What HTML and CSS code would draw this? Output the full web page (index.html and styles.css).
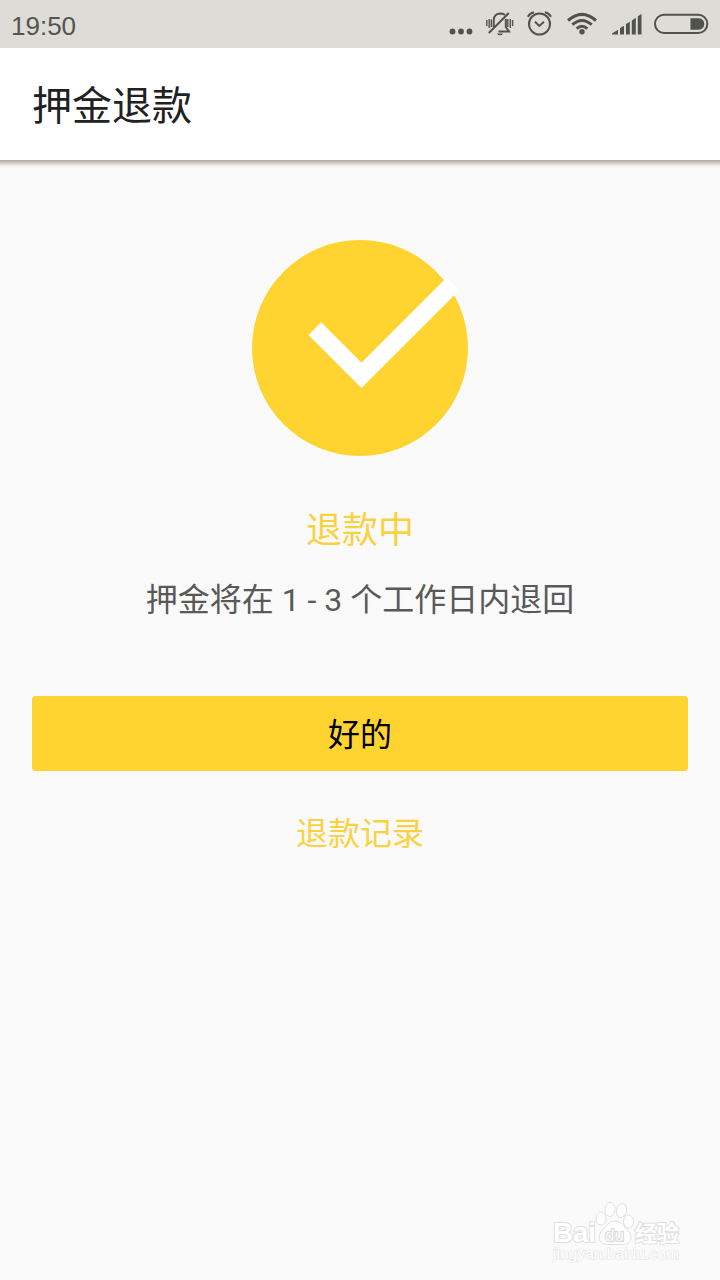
FILE: index.html
```html
<!DOCTYPE html>
<html lang="zh-CN">
<head>
<meta charset="utf-8">
<meta name="viewport" content="width=device-width, initial-scale=1">
<title>押金退款</title>
<link rel="stylesheet" href="styles.css">
</head>
<body>

<!-- 状态栏 -->
<div class="status">
	<span class="time">19:50</span>
	<div class="icons">
		<svg class="dots" width="24" height="48" viewBox="0 0 24 48">
			<circle cx="3.5" cy="31.5" r="2.9"/>
			<circle cx="12" cy="31.5" r="2.9"/>
			<circle cx="20.5" cy="31.5" r="2.9"/>
		</svg>
		<svg class="bell" width="30" height="48" viewBox="0 0 30 48">
			<path class="stroke" d="M20 14.8Q17.8 13.6 15 13.6Q9 14.2 8.7 20V27M20.8 19V27L24 31.5H13.5"/>
			<path class="stroke" d="M3.8 33L23.8 13"/>
			<path class="thin" d="M1.8 20V26M4.2 19V28M6.3 19.5V27M22.8 19V27M25.3 19V28M27.6 20V26"/>
			<path d="M12 33.4H18Q17 35.3 15 35.3Q13 35.3 12 33.4Z"/>
		</svg>
		<svg class="alarm" width="26" height="48" viewBox="0 0 26 48">
			<circle class="stroke" cx="13.5" cy="24" r="10.5"/>
			<path class="stroke" d="M9 21.8L13.3 26L18 21.8M1.8 16.8Q3.7 13.2 8 12.2M18.9 12.2Q23.2 13.2 25 16.8"/>
		</svg>
		<svg class="wifi" width="32" height="48" viewBox="0 0 32 48">
			<path class="thick" d="M2 20.5Q16 8.2 30 20.5M6.3 24.7Q16 16.2 25.7 24.7M10.7 28.7Q16 23.8 21.3 28.7"/>
			<circle cx="16" cy="31.7" r="2.7"/>
		</svg>
		<svg class="signal" width="30" height="48" viewBox="0 0 30 48">
			<path d="M0 34.5V33.5L6 29.8V34.5ZM8 34.5V28L12 25.7V34.5ZM14 34.5V24L17.8 21.7V34.5ZM19.8 34.5V20.5L23.8 17.7V34.5ZM25.8 34.5V16.3L29.5 14V34.5Z"/>
		</svg>
		<svg class="battery" width="55" height="48" viewBox="0 0 55 48">
			<rect class="outline" x="1" y="14.7" width="52.3" height="18.3" rx="9.1"/>
			<path d="M36.5 18.3H44.5Q50.3 18.8 50.3 24Q50.3 29.2 44.5 29.7H36.5Z"/>
		</svg>
	</div>
</div>

<div class="header">押金退款</div>

<!-- 退款结果 -->
<div class="content">
	<svg class="check" width="216" height="216" viewBox="0 0 216 216">
		<circle cx="108" cy="108" r="108"/>
		<path d="M62.8 88.6L109.5 135.3L201 43.8"/>
	</svg>
	<div class="state">退款中</div>
	<div class="tips">押金将在 1 - 3 个工作日内退回</div>
	<a class="btn">好的</a>
	<a class="record">退款记录</a>
</div>

<!-- 右下角水印 -->
<svg class="watermark" width="140" height="76" viewBox="0 0 140 76">
	<text class="logo" x="2" y="50" textLength="43" lengthAdjust="spacingAndGlyphs">Bai</text>
	<ellipse cx="50" cy="26.5" rx="5" ry="6.5"/>
	<ellipse cx="59" cy="17.5" rx="5" ry="7"/>
	<ellipse cx="70.5" cy="18.5" rx="5" ry="7" transform="rotate(12 70.5 18.5)"/>
	<ellipse cx="77.5" cy="29.5" rx="5" ry="6.5"/>
	<path d="M64 29C57 29 55 35 50 40C46 46 49 52.5 56 52.5H72C80 52.5 82 45 78 40C73 35 71 29 64 29Z"/>
	<text class="du" x="54" y="48.5" textLength="19" lengthAdjust="spacingAndGlyphs">du</text>
	<text class="cn" x="84" y="48.5">经验</text>
	<text class="url" x="2" y="67" textLength="126" lengthAdjust="spacingAndGlyphs">jingyan.baidu.com</text>
</svg>

</body>
</html>
```

FILE: styles.css
```css
html,body{margin:0;padding:0;}
body{
	position: relative;
	height: 1280px;
	overflow: hidden;
	font-family: Roboto,"Noto Sans CJK SC",sans-serif;
	background: #fafafa;
}

.status {
	display: flex;
	justify-content: space-between;
	height: 48px;
	line-height: 52px;
	background-color: #dddcd7;
	color: #545450;
}
.time {
	margin-left: 11px;
	font-family: "Liberation Sans",Arial,sans-serif;
	font-size: 26px;
}
.icons {
	display: flex;
	margin-right: 11px;
}
.icons svg {
	fill: #51514d;
}
.icons .stroke, .icons .thin, .icons .thick, .icons .outline {
	fill: none;
	stroke: #51514d;
	stroke-width: 2;
}
.icons .thin {
	stroke-width: 1.4;
}
.icons .thick {
	stroke-width: 3;
}
.bell {
	margin-left: 12px;
}
.alarm {
	margin-left: 11px;
}
.wifi {
	margin-left: 14px;
}
.signal {
	margin-left: 14px;
}
.battery {
	margin-left: 12px;
}

.header {
	height: 112px;
	padding-left: 32px;
	line-height: 117px;
	font-size: 40px;
	color: #212121;
	background-color: #fff;
}

.content {
	display: flex;
	flex-direction: column;
	align-items: center;
	padding: 80px 32px 0;
	/* 标题栏下方阴影 */
	background: linear-gradient(#aba89a, #d0cec5 3px, #f1f0ed 6px, #fafafa 9px);
}
.check {
	fill: #ffd430;
}
.check path {
	fill: none;
	stroke: #fff;
	stroke-width: 18;
}
.state {
	margin-top: 49px;
	line-height: 52px;
	font-size: 36px;
	color: #fad241;
}
.tips {
	margin-top: 19px;
	line-height: 48px;
	font-size: 32px;
	color: #595959;
}
.btn {
	align-self: stretch;
	height: 75px;
	margin-top: 72px;
	border-radius: 4px;
	line-height: 79px;
	font-size: 32px;
	text-align: center;
	color: #000;
	background-color: #ffd430;
}
.record {
	margin-top: 39px;
	line-height: 48px;
	font-size: 32px;
	color: #fad241;
}

.watermark {
	position: absolute;
	left: 551px;
	top: 1192px;
	fill: #fff;
	stroke: #e0e0e0;
	stroke-width: 1;
}
.watermark text {
	paint-order: stroke;
	stroke-width: 2;
	font-family: "Liberation Sans","Noto Sans CJK SC",sans-serif;
}
.watermark .logo {
	font-size: 28px;
	font-weight: bold;
}
.watermark .du {
	font-size: 17px;
	fill: #fafafa;
	stroke: #d8d8d8;
}
.watermark .cn {
	font-size: 22px;
	font-weight: bold;
}
.watermark .url {
	font-size: 14px;
	stroke: #e6e6e6;
	stroke-width: 1.2;
}
```
